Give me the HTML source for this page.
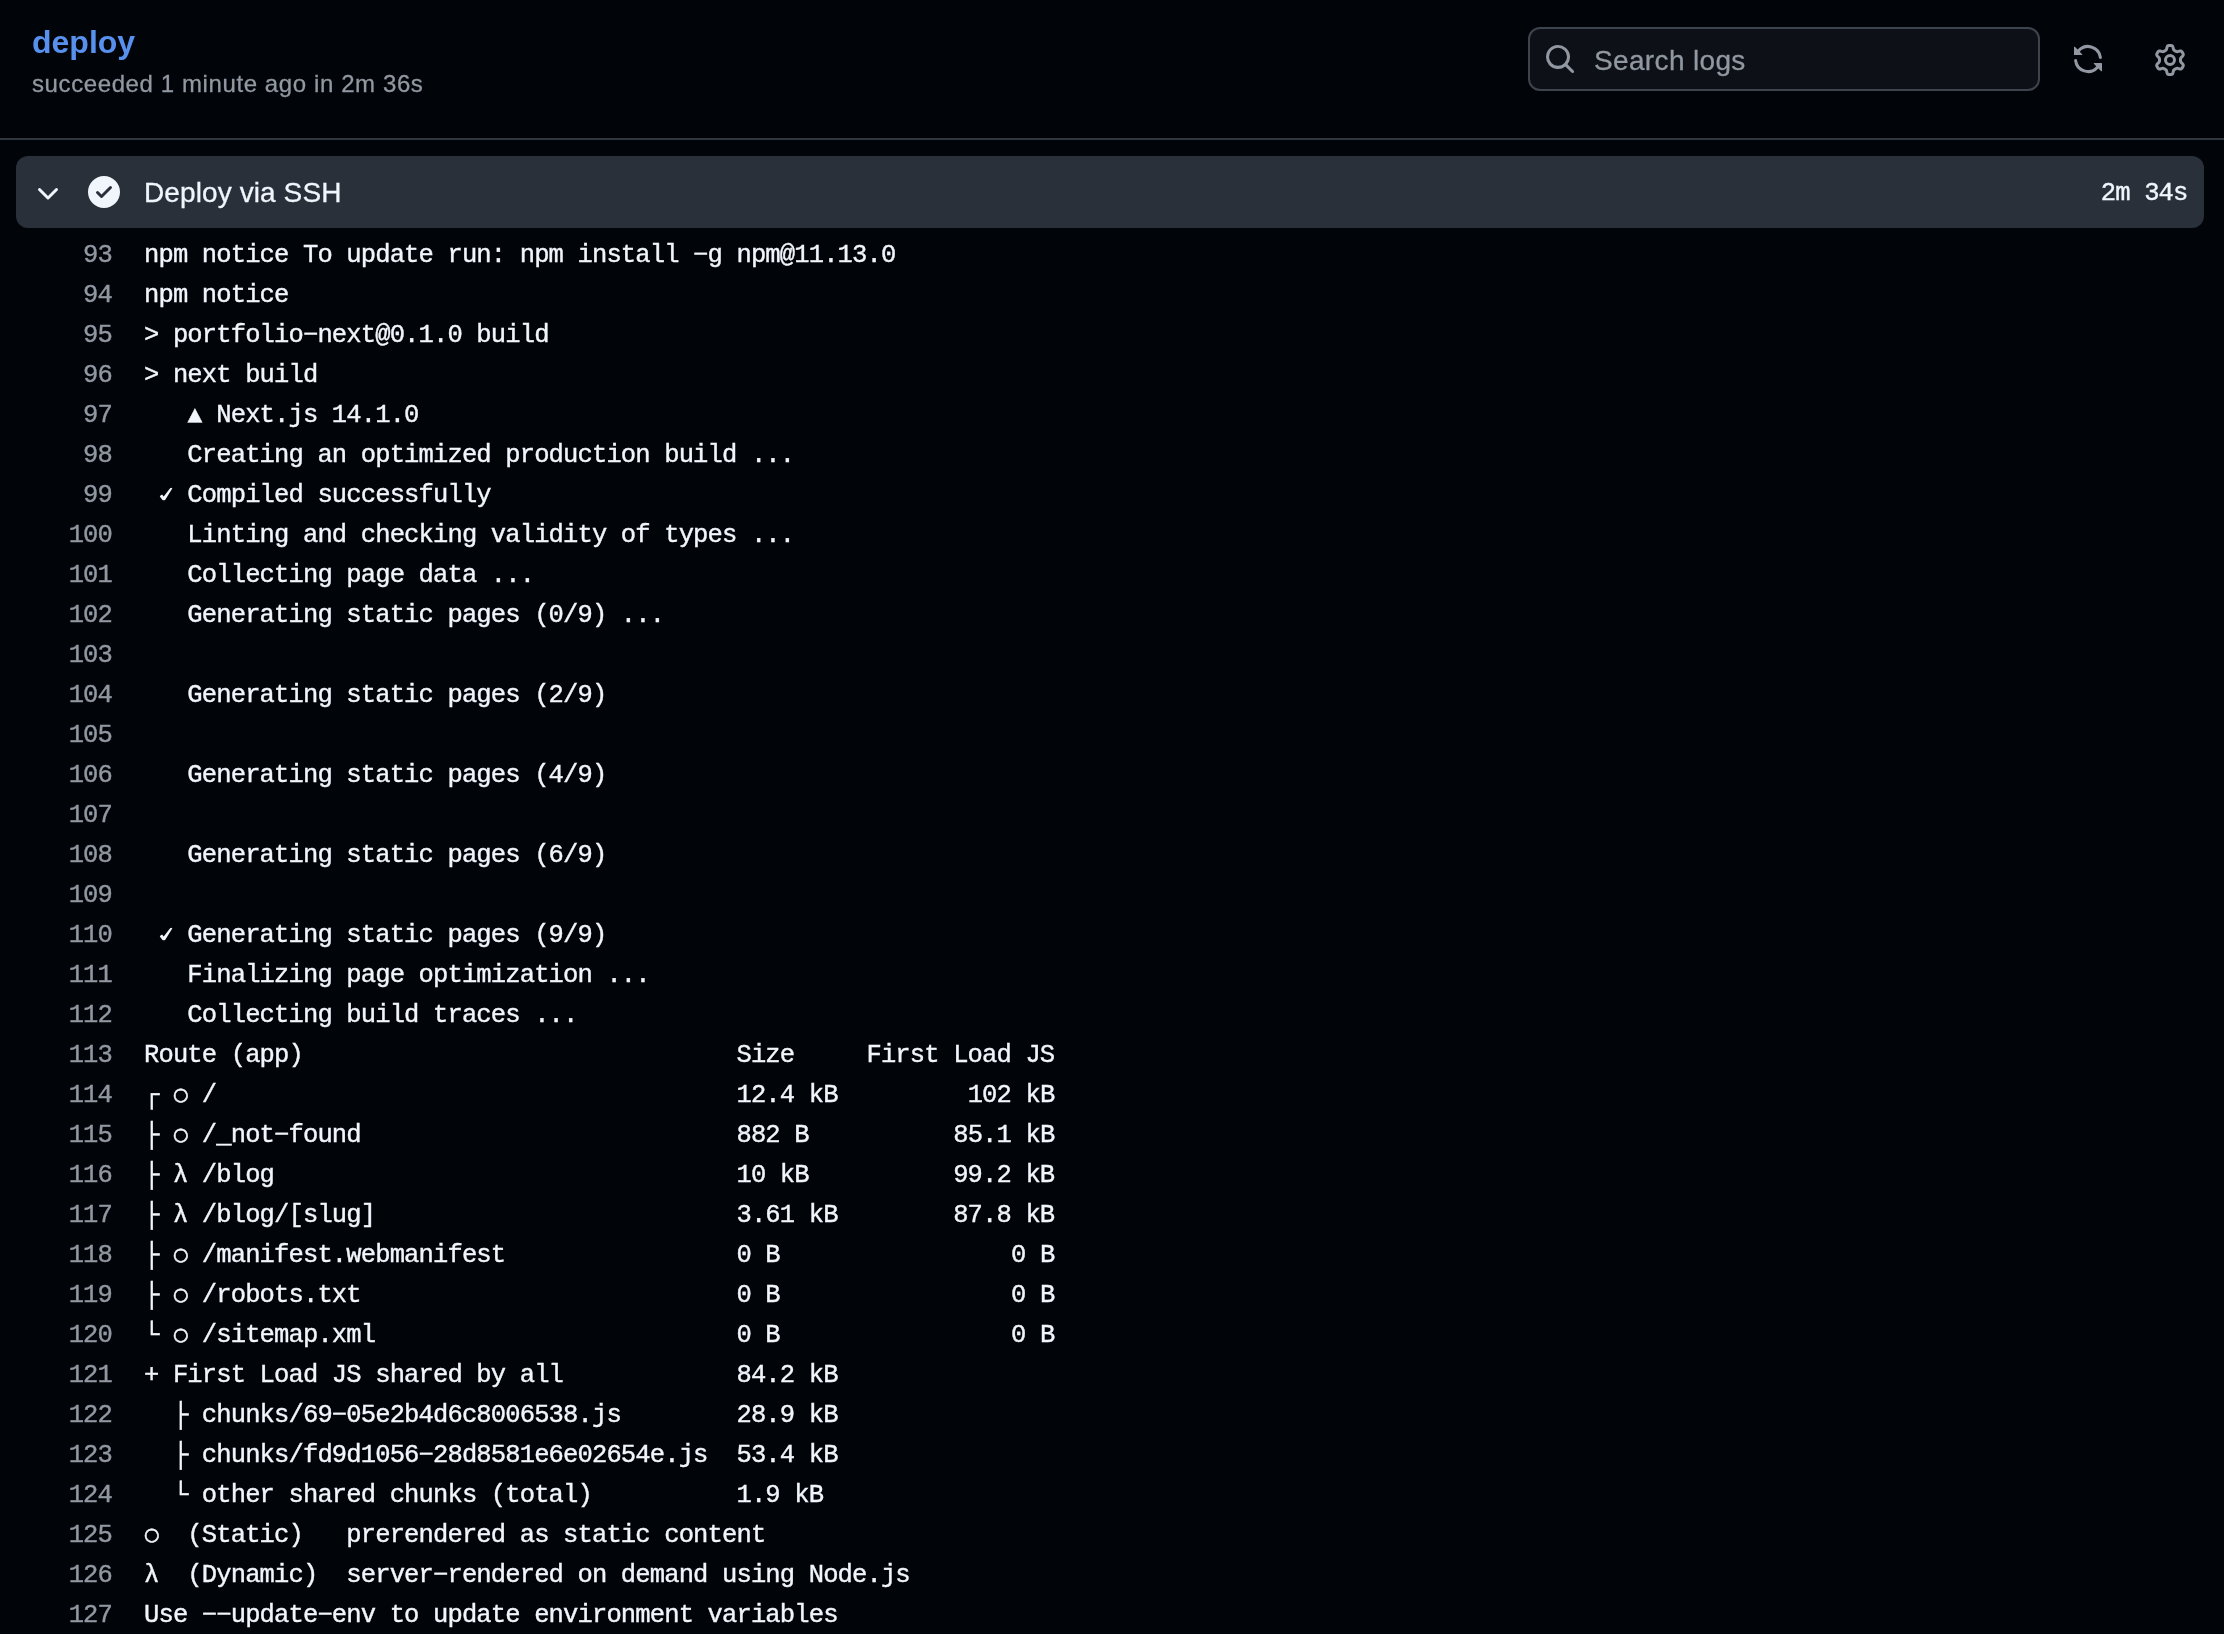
<!DOCTYPE html>
<html>
<head>
<meta charset="utf-8">
<style>
html,body{margin:0;padding:0;}
body{width:2224px;height:1634px;overflow:hidden;background:#010409;position:relative;font-family:"Liberation Sans",sans-serif;color:#f0f6fc;}
.abs{position:absolute;will-change:transform;}
#title{left:32px;top:22px;font-size:32px;font-weight:bold;color:#5891ed;line-height:40px;white-space:nowrap;}
#sub{left:32px;top:68px;-webkit-text-stroke:0.3px currentColor;letter-spacing:0.6px;font-size:24px;color:#9198a1;line-height:32px;white-space:nowrap;}
#search{left:1528px;top:27px;width:508px;height:60px;border:2px solid #3d444d;border-radius:12px;background:#0d1117;}
#search .ph{position:absolute;left:64px;top:15.5px;-webkit-text-stroke:0.3px currentColor;letter-spacing:0.35px;font-size:28px;line-height:32px;color:#9198a1;white-space:nowrap;}
#rule{left:0;top:138px;width:2224px;height:2px;background:#30363d;}
#step{left:16px;top:156px;width:2188px;height:72px;border-radius:12px;background:#2a303a;}
#step .name{position:absolute;left:128px;top:20.5px;letter-spacing:0.1px;-webkit-text-stroke:0.3px currentColor;font-size:28px;line-height:32px;color:#f0f6fc;white-space:nowrap;}
#step .dur{position:absolute;-webkit-text-stroke:0.4px currentColor;right:16.5px;top:18px;letter-spacing:-0.855px;font-family:"Liberation Mono",monospace;font-size:25.5px;line-height:40px;color:#f0f6fc;white-space:nowrap;}
#log{left:0;top:236px;-webkit-text-stroke:0.4px currentColor;will-change:transform;letter-spacing:-0.853px;font-family:"Liberation Mono",monospace;font-size:25.5px;line-height:40px;}
.ln{display:block;height:40px;white-space:pre;}
.ln .n{display:inline-block;width:112px;text-align:right;color:#9198a1;}
.ln .t{position:absolute;left:144px;color:#f0f6fc;}
.ck{display:inline-block;width:14.45px;height:10px;position:relative;}
.ck svg{position:absolute;left:1.3px;top:-5px;overflow:visible;}
.tri{display:inline-block;transform:translate(0.3px,1.5px) scale(0.97);}
.o{display:inline-block;transform:translateY(1.5px) scale(1.22);}
</style>
</head>
<body>
<div id="title" class="abs">deploy</div>
<div id="sub" class="abs">succeeded 1 minute ago in 2m 36s</div>
<div id="search" class="abs">
  <svg class="abs" style="left:14px;top:14px" width="32" height="32" viewBox="0 0 16 16"><path fill="#9198a1" d="M10.68 11.74a6 6 0 0 1-7.922-8.982 6 6 0 0 1 8.982 7.922l3.04 3.04a.749.749 0 0 1-.326 1.275.749.749 0 0 1-.734-.215ZM11.5 7a4.499 4.499 0 1 0-8.997 0A4.499 4.499 0 0 0 11.5 7Z"/></svg>
  <div class="ph">Search logs</div>
</div>
<svg class="abs" style="left:2072px;top:43px" width="32" height="32" viewBox="0 0 16 16"><path fill="#9198a1" d="M1.705 8.005a.75.75 0 0 1 .834.656 5.5 5.5 0 0 0 9.592 2.97l-1.204-1.204a.25.25 0 0 1 .177-.427h3.646a.25.25 0 0 1 .25.25v3.646a.25.25 0 0 1-.427.177l-1.38-1.38A7.002 7.002 0 0 1 1.05 8.84a.75.75 0 0 1 .656-.834ZM8 2.5a5.487 5.487 0 0 0-4.131 1.869l1.204 1.204A.25.25 0 0 1 4.896 6H1.25A.25.25 0 0 1 1 5.75V2.104a.25.25 0 0 1 .427-.177l1.38 1.38A7.002 7.002 0 0 1 14.95 7.16a.75.75 0 0 1-1.49.178A5.5 5.5 0 0 0 8 2.5Z"/></svg>
<svg class="abs" style="left:2154px;top:44px" width="32" height="32" viewBox="0 0 16 16"><path fill="#9198a1" d="M8 0a8.2 8.2 0 0 1 .701.031C9.444.095 9.99.645 10.16 1.29l.288 1.107c.018.066.079.158.212.224.231.114.454.243.668.386.123.082.233.09.299.071l1.103-.303c.644-.176 1.392.021 1.82.63.27.385.506.792.704 1.218.315.675.111 1.422-.364 1.891l-.814.806c-.049.048-.098.147-.088.294.016.257.016.515 0 .772-.01.147.038.246.088.294l.814.806c.475.469.679 1.216.364 1.891a7.977 7.977 0 0 1-.704 1.217c-.428.61-1.176.807-1.82.63l-1.102-.302c-.067-.019-.177-.011-.3.071a5.909 5.909 0 0 1-.668.386c-.133.066-.194.158-.211.224l-.29 1.106c-.168.646-.715 1.196-1.458 1.26a8.006 8.006 0 0 1-1.402 0c-.743-.064-1.289-.614-1.458-1.26l-.289-1.106c-.018-.066-.079-.158-.212-.224a5.738 5.738 0 0 1-.668-.386c-.123-.082-.233-.09-.299-.071l-1.103.303c-.644.176-1.392-.021-1.82-.63a8.12 8.12 0 0 1-.704-1.218c-.315-.675-.111-1.422.363-1.891l.815-.806c.05-.048.098-.147.088-.294a6.214 6.214 0 0 1 0-.772c.01-.147-.038-.246-.088-.294l-.815-.806C.635 6.045.431 5.298.746 4.623a7.92 7.92 0 0 1 .704-1.217c.428-.61 1.176-.807 1.82-.63l1.102.302c.067.019.177.011.3-.071.214-.143.437-.272.668-.386.133-.066.194-.158.211-.224l.29-1.106C6.009.645 6.556.095 7.299.03 7.53.01 7.764 0 8 0Zm-.571 1.525c-.036.003-.108.036-.137.146l-.289 1.105c-.147.561-.549.967-.998 1.189-.173.086-.34.183-.5.29-.417.278-.97.423-1.529.27l-1.103-.303c-.109-.03-.175.016-.195.045-.22.312-.412.644-.573.99-.014.031-.021.11.059.19l.815.806c.411.406.562.957.53 1.456a4.709 4.709 0 0 0 0 .582c.032.499-.119 1.05-.53 1.456l-.815.806c-.081.08-.073.159-.059.19.162.346.353.677.573.989.02.03.085.076.195.046l1.102-.303c.56-.153 1.113-.008 1.53.27.161.107.328.204.501.29.447.222.85.629.997 1.189l.289 1.105c.029.109.101.143.137.146a6.6 6.6 0 0 0 1.142 0c.036-.003.108-.036.137-.146l.289-1.105c.147-.561.549-.967.998-1.189.173-.086.34-.183.5-.29.417-.278.97-.423 1.529-.27l1.103.303c.109.029.175-.016.195-.045.22-.313.411-.644.573-.99.014-.031.021-.11-.059-.19l-.815-.806c-.411-.406-.562-.957-.53-1.456a4.709 4.709 0 0 0 0-.582c-.032-.499.119-1.05.53-1.456l.815-.806c.081-.08.073-.159.059-.19a6.464 6.464 0 0 0-.573-.989c-.02-.03-.085-.076-.195-.046l-1.102.303c-.56.153-1.113.008-1.53-.27a4.44 4.44 0 0 0-.501-.29c-.447-.222-.85-.629-.997-1.189l-.289-1.105c-.029-.11-.101-.143-.137-.146a6.6 6.6 0 0 0-1.142 0ZM11 8a3 3 0 1 1-6 0 3 3 0 0 1 6 0ZM9.5 8a1.5 1.5 0 1 0-3.001.001A1.5 1.5 0 0 0 9.5 8Z"/></svg>
<div id="rule" class="abs"></div>
<div id="step" class="abs">
  <svg class="abs" style="left:16px;top:21.5px" width="32" height="32" viewBox="0 0 16 16"><path fill="#f0f6fc" d="M12.78 5.22a.749.749 0 0 1 0 1.06l-4.25 4.25a.749.749 0 0 1-1.06 0L3.22 6.28a.749.749 0 1 1 1.06-1.06L8 8.939l3.72-3.719a.749.749 0 0 1 1.06 0Z"/></svg>
  <svg class="abs" style="left:72px;top:20px" width="32" height="32" viewBox="0 0 16 16"><path fill="#f0f6fc" d="M8 16A8 8 0 1 1 8 0a8 8 0 0 1 0 16Zm3.78-9.72a.751.751 0 0 0-.018-1.042.751.751 0 0 0-1.042-.018L6.75 9.19 5.28 7.72a.751.751 0 0 0-1.042.018.751.751 0 0 0-.018 1.042l2 2a.75.75 0 0 0 1.06 0Z"/></svg>
  <div class="name">Deploy via SSH</div>
  <div class="dur">2m 34s</div>
</div>
<div id="log" class="abs">
<div class="ln"><span class="n">93</span><span class="t">npm notice To update run: npm install −g npm@11.13.0</span></div>
<div class="ln"><span class="n">94</span><span class="t">npm notice</span></div>
<div class="ln"><span class="n">95</span><span class="t">&gt; portfolio−next@0.1.0 build</span></div>
<div class="ln"><span class="n">96</span><span class="t">&gt; next build</span></div>
<div class="ln"><span class="n">97</span><span class="t">   <span class="tri">▲</span> Next.js 14.1.0</span></div>
<div class="ln"><span class="n">98</span><span class="t">   Creating an optimized production build ...</span></div>
<div class="ln"><span class="n">99</span><span class="t"> <span class="ck"><svg width="13" height="14" viewBox="0 0 13 14"><path fill="#f0f6fc" d="M-0.2 9.6 Q0.5 7.9 2.1 7.5 L3.7 9.6 L10.1 1.2 Q11.4 0.3 12.4 1.3 L5.3 12.7 Q3.9 13.8 2.5 12.9 Z"/></svg></span> Compiled successfully</span></div>
<div class="ln"><span class="n">100</span><span class="t">   Linting and checking validity of types ...</span></div>
<div class="ln"><span class="n">101</span><span class="t">   Collecting page data ...</span></div>
<div class="ln"><span class="n">102</span><span class="t">   Generating static pages (0/9) ...</span></div>
<div class="ln"><span class="n">103</span><span class="t"></span></div>
<div class="ln"><span class="n">104</span><span class="t">   Generating static pages (2/9)</span></div>
<div class="ln"><span class="n">105</span><span class="t"></span></div>
<div class="ln"><span class="n">106</span><span class="t">   Generating static pages (4/9)</span></div>
<div class="ln"><span class="n">107</span><span class="t"></span></div>
<div class="ln"><span class="n">108</span><span class="t">   Generating static pages (6/9)</span></div>
<div class="ln"><span class="n">109</span><span class="t"></span></div>
<div class="ln"><span class="n">110</span><span class="t"> <span class="ck"><svg width="13" height="14" viewBox="0 0 13 14"><path fill="#f0f6fc" d="M-0.2 9.6 Q0.5 7.9 2.1 7.5 L3.7 9.6 L10.1 1.2 Q11.4 0.3 12.4 1.3 L5.3 12.7 Q3.9 13.8 2.5 12.9 Z"/></svg></span> Generating static pages (9/9)</span></div>
<div class="ln"><span class="n">111</span><span class="t">   Finalizing page optimization ...</span></div>
<div class="ln"><span class="n">112</span><span class="t">   Collecting build traces ...</span></div>
<div class="ln"><span class="n">113</span><span class="t">Route (app)                              Size     First Load JS</span></div>
<div class="ln"><span class="n">114</span><span class="t">┌ <span class="o">○</span> /                                    12.4 kB         102 kB</span></div>
<div class="ln"><span class="n">115</span><span class="t">├ <span class="o">○</span> /_not−found                          882 B          85.1 kB</span></div>
<div class="ln"><span class="n">116</span><span class="t">├ λ /blog                                10 kB          99.2 kB</span></div>
<div class="ln"><span class="n">117</span><span class="t">├ λ /blog/[slug]                         3.61 kB        87.8 kB</span></div>
<div class="ln"><span class="n">118</span><span class="t">├ <span class="o">○</span> /manifest.webmanifest                0 B                0 B</span></div>
<div class="ln"><span class="n">119</span><span class="t">├ <span class="o">○</span> /robots.txt                          0 B                0 B</span></div>
<div class="ln"><span class="n">120</span><span class="t">└ <span class="o">○</span> /sitemap.xml                         0 B                0 B</span></div>
<div class="ln"><span class="n">121</span><span class="t">+ First Load JS shared by all            84.2 kB</span></div>
<div class="ln"><span class="n">122</span><span class="t">  ├ chunks/69−05e2b4d6c8006538.js        28.9 kB</span></div>
<div class="ln"><span class="n">123</span><span class="t">  ├ chunks/fd9d1056−28d8581e6e02654e.js  53.4 kB</span></div>
<div class="ln"><span class="n">124</span><span class="t">  └ other shared chunks (total)          1.9 kB</span></div>
<div class="ln"><span class="n">125</span><span class="t"><span class="o">○</span>  (Static)   prerendered as static content</span></div>
<div class="ln"><span class="n">126</span><span class="t">λ  (Dynamic)  server−rendered on demand using Node.js</span></div>
<div class="ln"><span class="n">127</span><span class="t">Use −−update−env to update environment variables</span></div>
</div>
</body>
</html>
